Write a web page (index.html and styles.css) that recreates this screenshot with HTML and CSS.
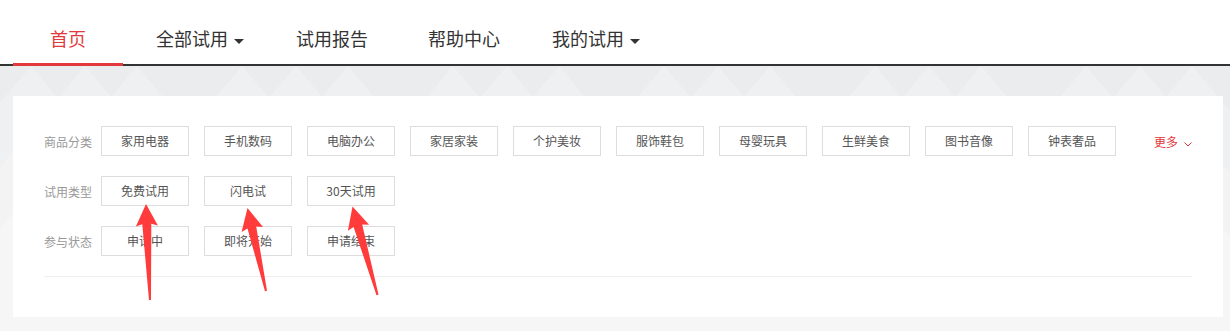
FILE: index.html
```html
<!DOCTYPE html>
<html>
<head>
    <title>试用中心</title>
    <link rel="stylesheet" href="styles.css">
</head>
<body>
    <div class="nav">
        <ul class="nav-list">
            <li class="nav-item active">首页</li>
            <li class="nav-item">全部试用<i class="caret"></i></li>
            <li class="nav-item">试用报告</li>
            <li class="nav-item">帮助中心</li>
            <li class="nav-item">我的试用<i class="caret"></i></li>
        </ul>
    </div>

    <div class="main">
        <div class="filter">
            <div class="filter-row">
                <span class="filter-label">商品分类</span>
                <a class="tag">家用电器</a>
                <a class="tag">手机数码</a>
                <a class="tag">电脑办公</a>
                <a class="tag">家居家装</a>
                <a class="tag">个护美妆</a>
                <a class="tag">服饰鞋包</a>
                <a class="tag">母婴玩具</a>
                <a class="tag">生鲜美食</a>
                <a class="tag">图书音像</a>
                <a class="tag">钟表奢品</a>
                <a class="more">更多<svg class="chevron" width="8" height="5" viewBox="0 0 8 5"><path d="M0.5 0.5 L4 4 L7.5 0.5" fill="none" stroke="#e4393c" stroke-width="1"/></svg></a>
            </div>
            <div class="filter-row">
                <span class="filter-label">试用类型</span>
                <a class="tag">免费试用</a>
                <a class="tag">闪电试</a>
                <a class="tag">30天试用</a>
            </div>
            <div class="filter-row">
                <span class="filter-label">参与状态</span>
                <a class="tag">申请中</a>
                <a class="tag">即将开始</a>
                <a class="tag">申请结束</a>
            </div>
            <div class="filter-line"></div>
        </div>
    </div>

    <!-- annotation arrows drawn over the page -->
    <svg class="arrows" width="1230" height="331" viewBox="0 0 1230 331">
        <polygon points="146,204 157.9,225.5 151.3,223.8 151,300 149,300 142.3,224.2 135.9,226.5"/>
        <polygon points="247.5,208 263,227.1 256.2,226.5 267,290.8 265,291.2 247.5,228.5 241.6,231.9"/>
        <polygon points="352.5,206.5 369.1,224.7 362.2,224.5 378.5,294.7 376.5,295.3 353.6,226.9 347.9,230.7"/>
    </svg>
</body>
</html>
```

FILE: styles.css
```css
body {
    margin: 0;
    font-family: "Noto Sans CJK SC", "Liberation Sans", sans-serif;
    background-color: #ebeced;
    position: relative;
    height: 331px;
    overflow: hidden;
}
.nav {
    background-color: #fff;
    border-bottom: 2px solid #333;
    height: 64px;
}
.nav-list {
    list-style: none;
    margin: 0;
    padding: 0 0 0 2px;
    display: flex;
}
.nav-item {
    position: relative;
    width: 132px;
    height: 64px;
    box-sizing: border-box;
    padding-top: 26px;
    line-height: 24px;
    font-size: 18px;
    color: #333;
    text-align: center;
}
.nav-item.active {
    color: #e4393c;
}
.nav-item.active::after {
    content: "";
    position: absolute;
    left: 11px;
    bottom: -2px;
    width: 110px;
    height: 3px;
    background-color: #e4393c;
}
.caret {
    display: inline-block;
    width: 0;
    height: 0;
    margin-left: 6px;
    border-left: 5px solid transparent;
    border-right: 5px solid transparent;
    border-top: 5px solid #333;
    vertical-align: middle;
}
.main {
    padding: 30px 7px 14px 13px;
    background-color: #ebeced;
    background-image:
        conic-gradient(from 140deg at 31px 0, rgba(255, 255, 255, 0.22) 0 80deg, transparent 0),
        conic-gradient(from 140deg at 85px 0, rgba(255, 255, 255, 0.22) 0 80deg, transparent 0),
        conic-gradient(from 140deg at 137px 0, rgba(255, 255, 255, 0.22) 0 80deg, transparent 0);
    background-size: 211px 100%;
    background-repeat: repeat-x;
}
.filter {
    background-color: #fff;
    padding: 30px 31px 40px;
}
.filter-row {
    display: flex;
    align-items: center;
    height: 30px;
    margin-bottom: 20px;
}
.filter-label {
    width: 57px;
    font-size: 12px;
    color: #999;
}
.tag {
    width: 88px;
    height: 30px;
    box-sizing: border-box;
    margin-right: 15px;
    border: 1px solid #ddd;
    line-height: 28px;
    text-align: center;
    font-size: 12px;
    color: #555;
}
.more {
    margin-left: auto;
    font-size: 12px;
    color: #e4393c;
}
.chevron {
    margin-left: 6px;
    vertical-align: 0;
}
.filter-line {
    border-top: 1px solid #eee;
}
.arrows {
    position: absolute;
    top: 0;
    left: 0;
    pointer-events: none;
    fill: #ff3b3b;
}
```
